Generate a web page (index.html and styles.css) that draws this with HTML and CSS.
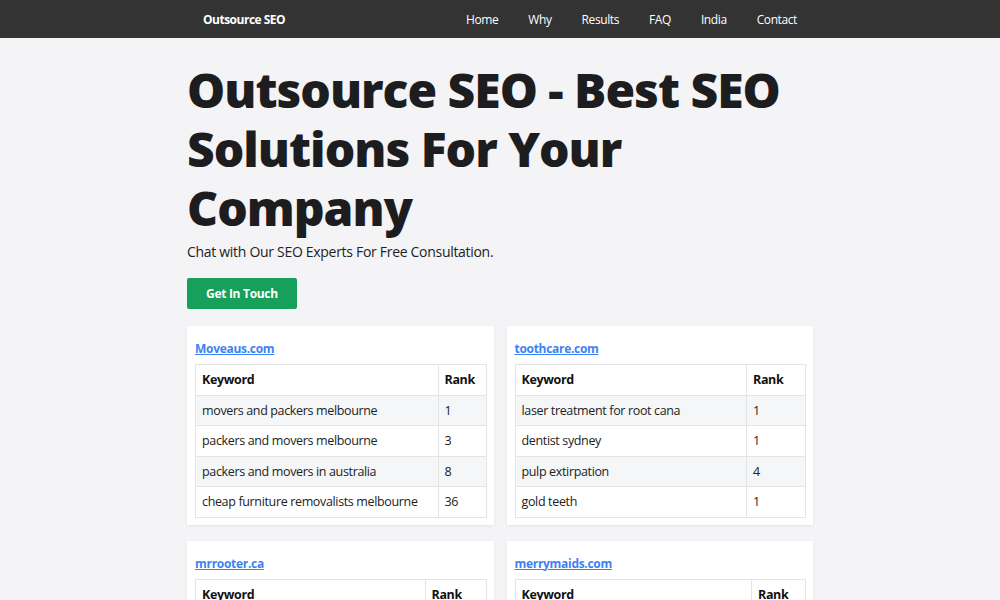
FILE: index.html
```html
<!DOCTYPE html>
<html lang="en">
<head>
<meta charset="utf-8">
<title>Outsource SEO</title>
<link rel="stylesheet" href="styles.css">
</head>
<body>
<nav class="navbar">
  <div class="nav-inner">
    <a class="brand" href="#">Outsource SEO</a>
    <ul class="nav-links">
      <li><a href="#">Home</a></li>
      <li><a href="#">Why</a></li>
      <li><a href="#">Results</a></li>
      <li><a href="#">FAQ</a></li>
      <li><a href="#">India</a></li>
      <li><a href="#">Contact</a></li>
    </ul>
  </div>
</nav>
<main class="container">
  <h1 class="title">Outsource SEO - Best SEO Solutions For Your Company</h1>
  <p class="lead">Chat with Our SEO Experts For Free Consultation.</p>
  <a class="btn" href="#">Get In Touch</a>
  <div class="grid">
    <section class="card">
      <a class="site" href="#">Moveaus.com</a>
      <table class="rank-table">
        <thead><tr><th>Keyword</th><th class="rank rank-48">Rank</th></tr></thead>
        <tbody>
          <tr><td>movers and packers melbourne</td><td>1</td></tr>
          <tr><td>packers and movers melbourne</td><td>3</td></tr>
          <tr><td>packers and movers in australia</td><td>8</td></tr>
          <tr><td>cheap furniture removalists melbourne</td><td>36</td></tr>
        </tbody>
      </table>
    </section>
    <section class="card">
      <a class="site" href="#">toothcare.com</a>
      <table class="rank-table">
        <thead><tr><th>Keyword</th><th class="rank rank-59">Rank</th></tr></thead>
        <tbody>
          <tr><td>laser treatment for root cana</td><td>1</td></tr>
          <tr><td>dentist sydney</td><td>1</td></tr>
          <tr><td>pulp extirpation</td><td>4</td></tr>
          <tr><td>gold teeth</td><td>1</td></tr>
        </tbody>
      </table>
    </section>
    <section class="card">
      <a class="site" href="#">mrrooter.ca</a>
      <table class="rank-table">
        <thead><tr><th>Keyword</th><th class="rank rank-61">Rank</th></tr></thead>
        <tbody>
          <tr><td>plumber toronto</td><td>2</td></tr>
          <tr><td>drain cleaning toronto</td><td>1</td></tr>
          <tr><td>emergency plumber</td><td>3</td></tr>
          <tr><td>sewer repair</td><td>2</td></tr>
        </tbody>
      </table>
    </section>
    <section class="card">
      <a class="site" href="#">merrymaids.com</a>
      <table class="rank-table">
        <thead><tr><th>Keyword</th><th class="rank rank-54">Rank</th></tr></thead>
        <tbody>
          <tr><td>house cleaning service</td><td>1</td></tr>
          <tr><td>maid service</td><td>2</td></tr>
          <tr><td>home cleaning</td><td>1</td></tr>
          <tr><td>cleaning lady</td><td>3</td></tr>
        </tbody>
      </table>
    </section>
  </div>
</main>
</body>
</html>
```
FILE: styles.css
```css
* { box-sizing: border-box; }
html, body { margin: 0; padding: 0; }
body {
  background: #f4f4f6;
  font-family: "Open Sans", "Liberation Sans", sans-serif;
  color: #222;
}
.navbar {
  background: #333333;
  height: 38px;
}
.nav-inner {
  width: 624px;
  margin: 0 auto;
  height: 100%;
  display: flex;
  align-items: center;
  justify-content: space-between;
  padding: 0 15px 0 15px;
}
.brand {
  color: #fff;
  font-weight: 700;
  font-size: 12px;
  text-decoration: none;
  letter-spacing: -0.5px;
}
.nav-links {
  list-style: none;
  margin: 0;
  padding: 0;
  display: flex;
  gap: 30px;
}
.nav-links li a {
  color: #fff;
  text-decoration: none;
  font-size: 12px;
  letter-spacing: -0.4px;
  display: block;
}
.container {
  width: 626px;
  margin: 0 auto;
  padding-top: 5px;
}
.title {
  font-size: 48px;
  line-height: 59px;
  font-weight: 800;
  color: #1d1d1f;
  margin: 17px 0 0 0;
  letter-spacing: -1px;
}
.lead {
  font-size: 14px;
  letter-spacing: -0.3px;
  margin: 5px 0 17px 0;
  color: #222;
}
.btn {
  display: inline-block;
  background: #16a05a;
  color: #fff;
  font-weight: 700;
  font-size: 12px;
  letter-spacing: -0.3px;
  padding: 0 19px;
  height: 31px;
  line-height: 31px;
  border-radius: 2px;
  text-decoration: none;
}
.grid {
  display: grid;
  grid-template-columns: 1fr 1fr;
  column-gap: 13px;
  row-gap: 16px;
  margin-top: 17px;
}
.card {
  background: #fff;
  box-shadow: 0 1px 3px rgba(0,0,0,0.07);
  padding: 14px 7px 7px 8px;
}
.site {
  display: block;
  color: #3b82f6;
  font-weight: 700;
  font-size: 12px;
  letter-spacing: -0.3px;
  text-decoration: underline;
  margin-bottom: 7px;
}
.rank-table {
  width: 100%;
  border-collapse: collapse;
  font-size: 12.5px;
  letter-spacing: -0.35px;
  color: #222;
}
.rank-table th, .rank-table td {
  border: 1px solid #e3e4e6;
  padding: 6px 6px;
  height: 30.5px;
  text-align: left;
}
.rank-table th {
  font-weight: 700;
  color: #111;
}
.rank-48 { width: 48px; }
.rank-54 { width: 54px; }
.rank-59 { width: 59px; }
.rank-61 { width: 61px; }
.rank-table tbody tr:nth-child(odd) { background: #f5f6f8; }
```
